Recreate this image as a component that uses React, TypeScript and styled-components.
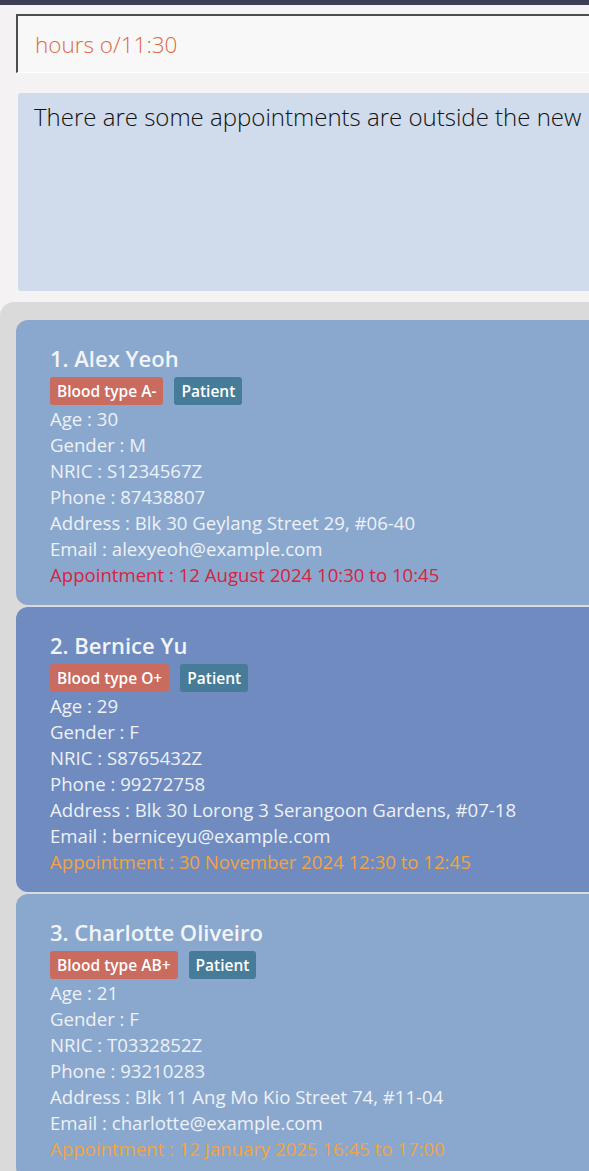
import React from "react";
import styled, { createGlobalStyle } from "styled-components";

const GlobalStyle = createGlobalStyle`
  html, body { margin: 0; padding: 0; }
  body {
    background: #f4f2f2;
    font-family: "Open Sans", "Noto Sans", sans-serif;
    overflow: hidden;
  }
`;

const Page = styled.div`
  display: flex;
  flex-direction: column;
  width: 589px;
  height: 1171px;
  overflow: hidden;
  & > * { flex-shrink: 0; }
`;

const TopBar = styled.div`
  height: 5px;
  background: #3c3e53;
`;

const CommandSection = styled.div`
  padding: 9px 0 0 16px;
`;

const CommandBox = styled.div`
  box-sizing: border-box;
  width: 620px;
  height: 59px;
  border-top: 2px solid #4d4d4d;
  border-left: 2px solid #4d4d4d;
  border-bottom: 1px solid #ffffff;
  background: #f8f8f8;
  display: flex;
  align-items: center;
  padding-left: 17px;
  color: #dc6a42;
  font-size: 22.5px;
  font-weight: 300;
`;

const ResultSection = styled.div`
  padding: 20px 0 0 18px;
`;

const ResultBox = styled.div`
  box-sizing: border-box;
  width: 620px;
  height: 198px;
  background: #d0dcec;
  border-radius: 3px;
  padding: 7px 16px;
  color: #111111;
  font-size: 24px;
  font-weight: 300;
  white-space: nowrap;
`;

const ListPanel = styled.div`
  margin-top: 11px;
  flex: 1;
  background: #dadada;
  border-top-left-radius: 14px;
  padding: 18px 0 0 16px;
  display: flex;
  flex-direction: column;
  gap: 2px;
`;

const Card = styled.div<{ $dark: boolean }>`
  box-sizing: border-box;
  width: 620px;
  height: 285px;
  flex-shrink: 0;
  background: ${(p) => (p.$dark ? "#6f8bc0" : "#8aa8ce")};
  border-radius: 12px;
  padding: 23px 0 0 34px;
  color: #eef1f6;
`;

const Name = styled.div`
  font-size: 22px;
  font-weight: 600;
  line-height: 30px;
  color: #f3f4f8;
`;

const Badges = styled.div`
  display: flex;
  gap: 11px;
  margin: 4px 0 1px;
`;

const Badge = styled.span<{ $kind: "blood" | "role" }>`
  display: inline-flex;
  align-items: center;
  height: 28px;
  padding: 0 7px;
  border-radius: 3px;
  background: ${(p) => (p.$kind === "blood" ? "#c96b5e" : "#467c98")};
  color: #ffffff;
  font-size: 15.5px;
  font-weight: 600;
`;

const Line = styled.div<{ $color?: string }>`
  font-size: 18.6px;
  line-height: 26px;
  white-space: nowrap;
  color: ${(p) => p.$color ?? "inherit"};
`;

type Person = {
  name: string;
  blood: string;
  age: string;
  gender: string;
  nric: string;
  phone: string;
  address: string;
  email: string;
  appt: string;
  apptColor: string;
};

const people: Person[] = [
  {
    name: "1. Alex Yeoh",
    blood: "Blood type A-",
    age: "30",
    gender: "M",
    nric: "S1234567Z",
    phone: "87438807",
    address: "Blk 30 Geylang Street 29, #06-40",
    email: "alexyeoh@example.com",
    appt: "12 August 2024 10:30 to 10:45",
    apptColor: "#d9223f",
  },
  {
    name: "2. Bernice Yu",
    blood: "Blood type O+",
    age: "29",
    gender: "F",
    nric: "S8765432Z",
    phone: "99272758",
    address: "Blk 30 Lorong 3 Serangoon Gardens, #07-18",
    email: "berniceyu@example.com",
    appt: "30 November 2024 12:30 to 12:45",
    apptColor: "#f2a43e",
  },
  {
    name: "3. Charlotte Oliveiro",
    blood: "Blood type AB+",
    age: "21",
    gender: "F",
    nric: "T0332852Z",
    phone: "93210283",
    address: "Blk 11 Ang Mo Kio Street 74, #11-04",
    email: "charlotte@example.com",
    appt: "12 January 2025 16:45 to 17:00",
    apptColor: "#f2a43e",
  },
];

export default function App() {
  return (
    <Page>
      <GlobalStyle />
      <TopBar />
      <CommandSection>
        <CommandBox>hours o/11:30</CommandBox>
      </CommandSection>
      <ResultSection>
        <ResultBox>There are some appointments are outside the new</ResultBox>
      </ResultSection>
      <ListPanel>
        {people.map((p, i) => (
          <Card key={p.name} $dark={i % 2 === 1}>
            <Name>{p.name}</Name>
            <Badges>
              <Badge $kind="blood">{p.blood}</Badge>
              <Badge $kind="role">Patient</Badge>
            </Badges>
            <Line>Age : {p.age}</Line>
            <Line>Gender : {p.gender}</Line>
            <Line>NRIC : {p.nric}</Line>
            <Line>Phone : {p.phone}</Line>
            <Line>Address : {p.address}</Line>
            <Line>Email : {p.email}</Line>
            <Line $color={p.apptColor}>Appointment : {p.appt}</Line>
          </Card>
        ))}
      </ListPanel>
    </Page>
  );
}
